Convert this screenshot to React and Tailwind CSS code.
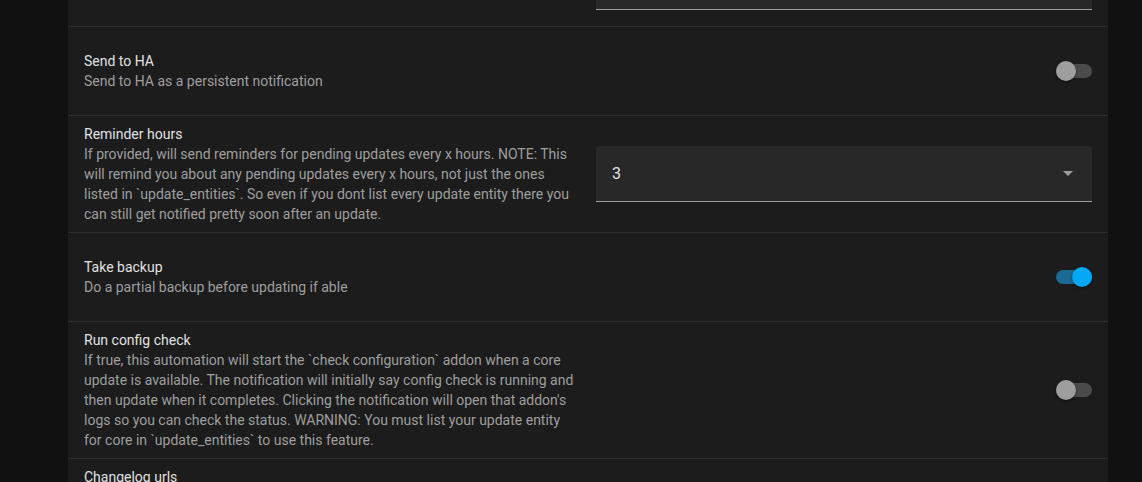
import React from "react";

const font = { fontFamily: "Roboto, 'Noto Sans', sans-serif" };

const Toggle = ({ on }) => (
  <div className="relative flex h-5 w-9 items-center">
    <div
      className={`h-[14px] w-9 rounded-full ${on ? "bg-[#1a6b94]" : "bg-[#4b4b4b]"}`}
    />
    <div
      className={`absolute top-0 h-5 w-5 rounded-full shadow-[0_1px_3px_rgba(0,0,0,0.5)] ${
        on ? "right-0 bg-[#03a9f4]" : "left-0 bg-[#9e9e9e]"
      }`}
    />
  </div>
);

const TextField = ({ value = "" }) => (
  <div className="flex h-14 w-full items-center rounded-t border-b border-[#9e9e9e] bg-[#282828] px-4 text-base text-[#e1e1e1]">
    {value}
  </div>
);

const Select = ({ value }) => (
  <div className="flex h-14 w-full items-center justify-between rounded-t border-b border-[#9e9e9e] bg-[#282828] pl-4 pr-[19px] text-base text-[#e1e1e1]">
    <span>{value}</span>
    <span className="h-0 w-0 border-x-[5px] border-t-[5px] border-x-transparent border-t-[#9e9e9e]" />
  </div>
);

const Row = ({ title, desc, control, wide }) => (
  <div className="flex min-h-[89px] items-center gap-4 border-b border-[#2f2f2f] px-4 py-2">
    <div className="w-[496px] shrink-0">
      <div className="text-sm leading-5 text-[#e1e1e1]">{title}</div>
      {desc && <div className="text-sm leading-5 text-[#9e9e9e]">{desc}</div>}
    </div>
    <div className={`flex flex-1 ${wide ? "" : "justify-end"}`}>{control}</div>
  </div>
);

const rows = [
  {
    title: "Notify device",
    desc: "Device to send notifications to",
    control: <TextField />,
    wide: true,
  },
  {
    title: "Send to HA",
    desc: "Send to HA as a persistent notification",
    control: <Toggle on={false} />,
  },
  {
    title: "Reminder hours",
    desc: "If provided, will send reminders for pending updates every x hours. NOTE: This will remind you about any pending updates every x hours, not just the ones listed in `update_entities`. So even if you dont list every update entity there you can still get notified pretty soon after an update.",
    control: <Select value="3" />,
    wide: true,
  },
  {
    title: "Take backup",
    desc: "Do a partial backup before updating if able",
    control: <Toggle on />,
  },
  {
    title: "Run config check",
    desc: "If true, this automation will start the `check configuration` addon when a core update is available. The notification will initially say config check is running and then update when it completes. Clicking the notification will open that addon's logs so you can check the status. WARNING: You must list your update entity for core in `update_entities` to use this feature.",
    control: <Toggle on={false} />,
  },
  {
    title: "Changelog urls",
    desc: "Links to the changelogs of the updates, shown in the notification so you can read what changed before you install. Add one url per line, in the same order as the entities listed in `update_entities`. Leave a line empty for an entity that has no changelog, and the notification will simply skip the link for that update when it is sent.",
    control: <TextField />,
    wide: true,
  },
];

export default function App() {
  return (
    <div className="h-[482px] overflow-hidden bg-[#111111]" style={font}>
      <div className="ml-[68px] mr-[34px] mt-[-62px] bg-[#1c1c1c]">
        {rows.map((r) => (
          <Row key={r.title} {...r} />
        ))}
      </div>
    </div>
  );
}
